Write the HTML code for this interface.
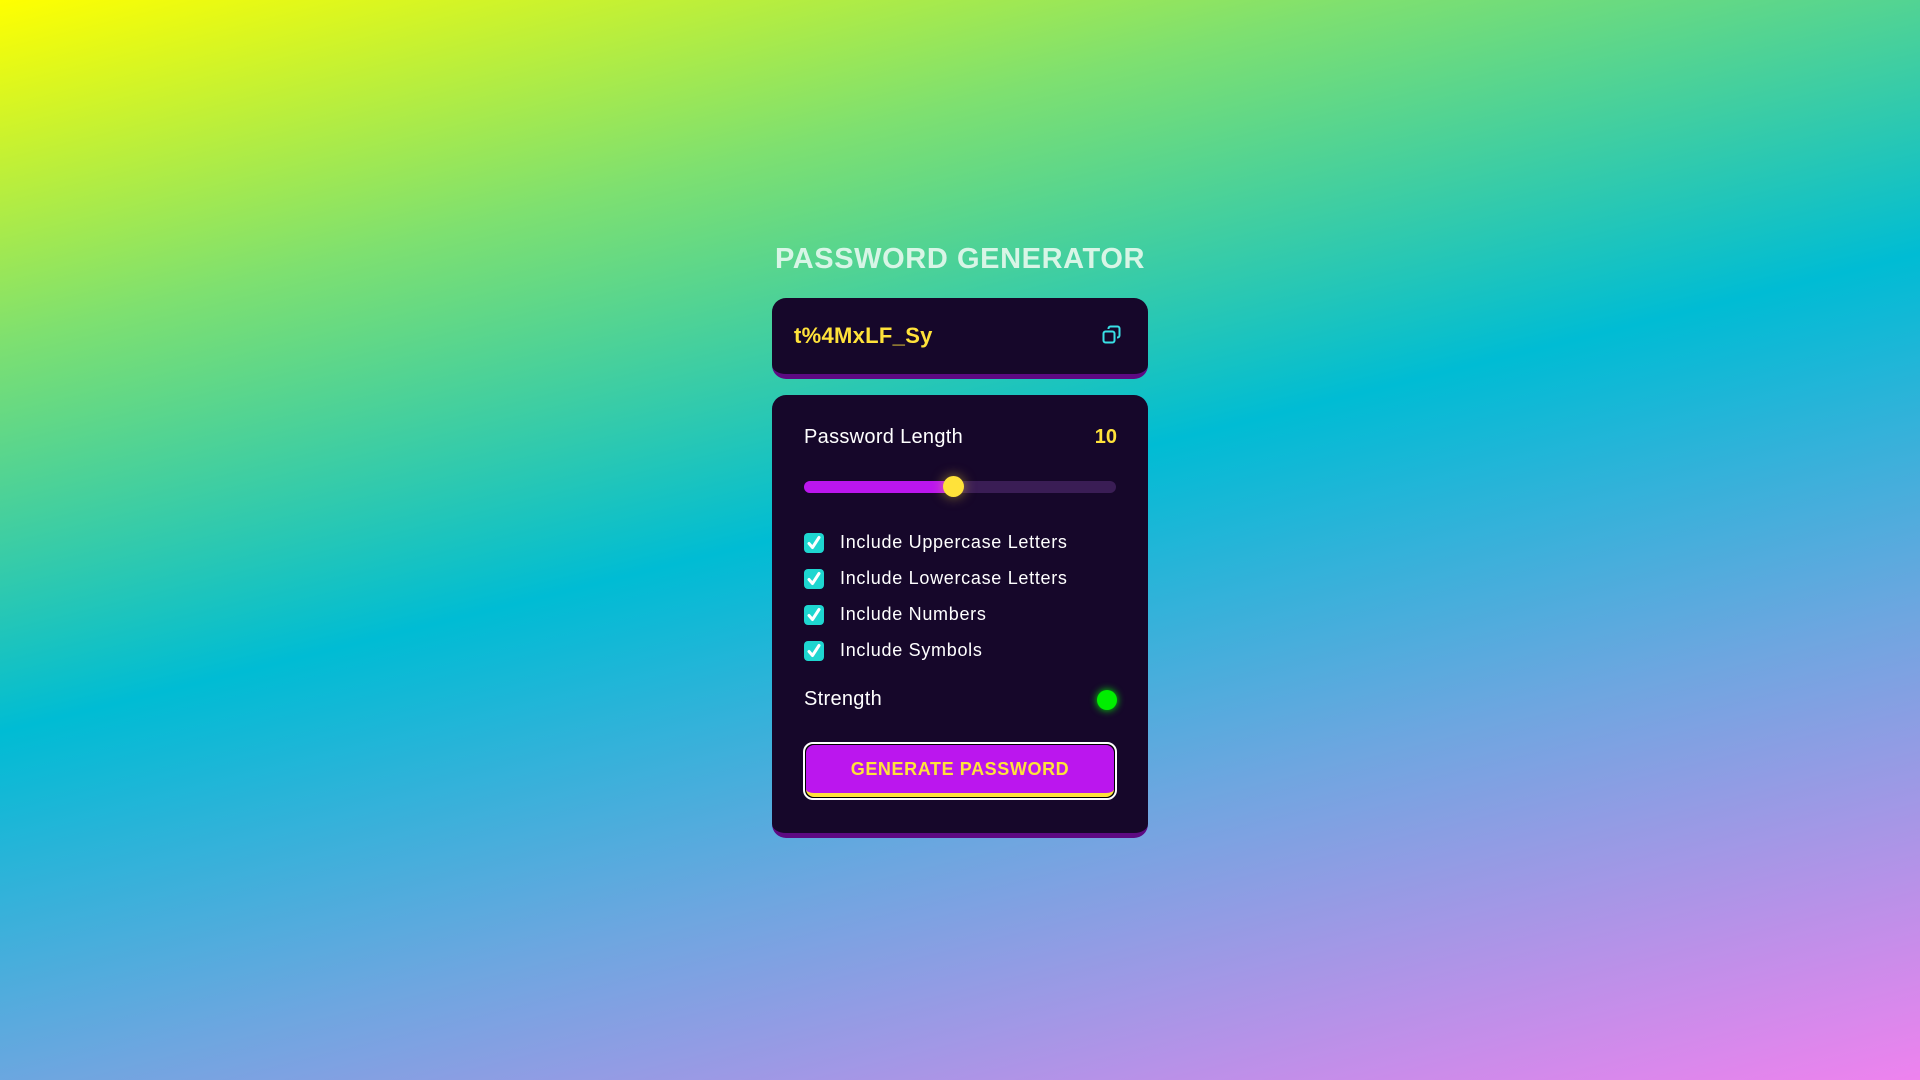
<!DOCTYPE html>
<html><head><meta charset="utf-8"><style>
*{margin:0;padding:0;box-sizing:border-box}
html,body{width:1920px;height:1080px;overflow:hidden}
body{background:linear-gradient(166deg,#ffff00 0%,#7ee070 22%,#00bcd4 47%,#6ea6e0 70%,#ee82ee 100%);font-family:"Liberation Sans",sans-serif;position:relative}
.title{position:absolute;left:672px;width:576px;top:243px;text-align:center;color:#d8f5e6;font-weight:bold;font-size:29px;letter-spacing:.6px;white-space:nowrap}
.pw{position:absolute;left:772px;top:298px;width:376px;height:81px;background:#16072a;border-radius:14px;border-bottom:5px solid #5d0a82}
.pw .t{position:absolute;left:22px;top:25px;color:#ffe23a;font-weight:bold;font-size:22px;letter-spacing:.3px}
.card{position:absolute;left:772px;top:395px;width:376px;height:443px;background:#16072a;border-radius:14px;border-bottom:5px solid #5d0a82}
.lbl{position:absolute;color:#fff;font-size:20px}
.chk{position:absolute;left:32px;width:20px;height:20px;background:#1ed6d0;border-radius:4px}
.chk svg{position:absolute;left:2px;top:2px}
.ct{position:absolute;left:68px;color:#fff;font-size:18px;letter-spacing:.7px}
.btn{position:absolute;left:31px;top:347px;width:314px;height:58px;border:2px solid #fff;border-radius:10px;background:#000}
.btn div{position:absolute;left:1px;top:1px;right:1px;bottom:1px;background:#bb16ee;border-radius:8px;border-bottom:4px solid #ffe23a;color:#ffe23a;font-weight:bold;font-size:18px;letter-spacing:.6px;text-align:center;line-height:48px}
</style></head><body>
<div class="title">PASSWORD GENERATOR</div>
<div class="pw"><div class="t">t%4MxLF_Sy</div>
<svg style="position:absolute;left:330px;top:27px" width="20" height="20" viewBox="0 0 20 20" fill="none" stroke="#39e0e6" stroke-width="2"><rect x="1.5" y="6.5" width="11" height="11" rx="2"/><path d="M6.5 4V3.5a2 2 0 0 1 2-2h7a2 2 0 0 1 2 2v7a2 2 0 0 1-2 2H15"/></svg></div>
<div class="card">
<div class="lbl" style="left:32px;top:31px;letter-spacing:.3px">Password Length</div>
<div class="lbl" style="right:31px;top:31px;color:#ffe23a;font-weight:bold">10</div>
<div style="position:absolute;left:32px;top:86px;width:312px;height:12px;border-radius:6px;background:#3a1d55"></div>
<div style="position:absolute;left:32px;top:86px;width:150px;height:12px;border-radius:6px;background:#bb16ee"></div>
<div style="position:absolute;left:171px;top:81px;width:21px;height:21px;border-radius:50%;background:#ffe23a;box-shadow:0 0 12px rgba(255,226,58,.5)"></div>
<div class="chk" style="top:138px"><svg width="16" height="16" viewBox="0 0 16 16"><path d="M3 8.5l3.5 4L13 2.5" stroke="#fff" stroke-width="3" fill="none" stroke-linecap="round" stroke-linejoin="round"/></svg></div>
<div class="ct" style="top:137px">Include Uppercase Letters</div>
<div class="chk" style="top:174px"><svg width="16" height="16" viewBox="0 0 16 16"><path d="M3 8.5l3.5 4L13 2.5" stroke="#fff" stroke-width="3" fill="none" stroke-linecap="round" stroke-linejoin="round"/></svg></div>
<div class="ct" style="top:173px">Include Lowercase Letters</div>
<div class="chk" style="top:210px"><svg width="16" height="16" viewBox="0 0 16 16"><path d="M3 8.5l3.5 4L13 2.5" stroke="#fff" stroke-width="3" fill="none" stroke-linecap="round" stroke-linejoin="round"/></svg></div>
<div class="ct" style="top:209px">Include Numbers</div>
<div class="chk" style="top:246px"><svg width="16" height="16" viewBox="0 0 16 16"><path d="M3 8.5l3.5 4L13 2.5" stroke="#fff" stroke-width="3" fill="none" stroke-linecap="round" stroke-linejoin="round"/></svg></div>
<div class="ct" style="top:245px">Include Symbols</div>
<div class="lbl" style="left:32px;top:293px;letter-spacing:.3px">Strength</div>
<div style="position:absolute;left:325px;top:295px;width:20px;height:20px;border-radius:50%;background:#00ee00;box-shadow:0 0 8px #00ee00"></div>
<div class="btn"><div>GENERATE PASSWORD</div></div>
</div>
</body></html>
